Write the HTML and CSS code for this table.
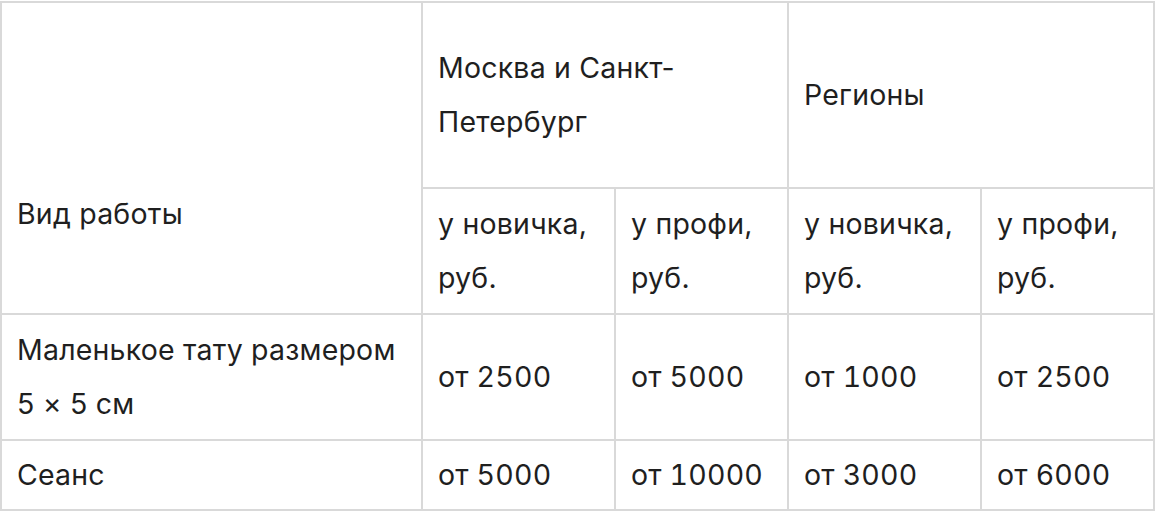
FILE: index.html
```html
<!DOCTYPE html>
<html lang="ru">
<head>
<meta charset="utf-8">
<link rel="stylesheet" href="styles.css">
</head>
<body>
<table class="prices">
  <colgroup>
    <col class="c-work">
    <col class="c-a">
    <col class="c-b">
    <col class="c-a">
    <col class="c-b">
  </colgroup>
  <tr class="row-head">
    <td rowspan="2" class="work-head">Вид работы</td>
    <td colspan="2">Москва и Санкт-Петербург</td>
    <td colspan="2">Регионы</td>
  </tr>
  <tr>
    <td>у новичка, руб.</td>
    <td>у профи, руб.</td>
    <td>у новичка, руб.</td>
    <td>у профи, руб.</td>
  </tr>
  <tr>
    <td>Маленькое тату размером 5 × 5 см</td>
    <td class="num">от 2500</td>
    <td class="num">от 5000</td>
    <td class="num">от 1000</td>
    <td class="num">от 2500</td>
  </tr>
  <tr class="row-last">
    <td>Сеанс</td>
    <td class="num">от 5000</td>
    <td class="num">от 10000</td>
    <td class="num">от 3000</td>
    <td class="num">от 6000</td>
  </tr>
</table>
</body>
</html>
```

FILE: styles.css
```css
html, body {
  margin: 0;
  padding: 0;
  background: #ffffff;
}

body {
  padding-top: 1px;
  font-family: Inter, "Noto Sans", "Liberation Sans", sans-serif;
  font-size: 28.5px;
  line-height: 54px;
  letter-spacing: 0.2px;
  color: #1f1f1f;
}

.prices {
  border-collapse: collapse;
  table-layout: fixed;
  width: 1155px;
}

.c-work { width: 421px; }
.c-a { width: 193px; }
.c-b { width: 173px; }

.prices td {
  border: 2px solid #d9d9d9;
  padding: 8px 15px;
  vertical-align: middle;
  text-align: left;
}

.prices td.num {
  font-variant-numeric: tabular-nums;
}

.prices td.work-head {
  vertical-align: bottom;
  padding-bottom: 72px;
}

.row-head {
  height: 186px;
}

.row-last td {
  padding-top: 7px;
  padding-bottom: 7px;
}
```
